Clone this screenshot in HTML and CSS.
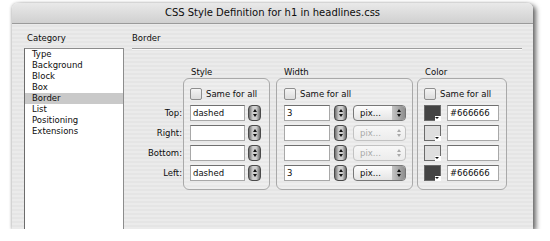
FILE: index.html
```html
<!DOCTYPE html>
<html lang="en">

<head>
  <meta charset="UTF-8" />
  <title>CSS Style Definition</title>
  <link rel="stylesheet" href="styles.css">
</head>

<body>
  <div class="window">
    <div class="titlebar">CSS Style Definition for h1 in headlines.css</div>

    <div class="content">
      <div class="sidebar">
        <div class="heading">Category</div>
        <ul class="categories">
          <li>Type</li>
          <li>Background</li>
          <li>Block</li>
          <li>Box</li>
          <li class="selected">Border</li>
          <li>List</li>
          <li>Positioning</li>
          <li>Extensions</li>
        </ul>
      </div>

      <div class="panel">
        <div class="heading panel-title">Border</div>

        <div class="groups">
          <div class="side-labels">
            <div class="row">Top:</div>
            <div class="row">Right:</div>
            <div class="row">Bottom:</div>
            <div class="row">Left:</div>
          </div>

          <!-- Style -->
          <div class="group group-style">
            <div class="group-label">Style</div>
            <div class="group-box">
              <div class="same"><span class="check"></span>Same for all</div>
              <div class="row"><span class="field field-style">dashed</span><span class="stepper"></span></div>
              <div class="row"><span class="field field-style"></span><span class="stepper"></span></div>
              <div class="row"><span class="field field-style"></span><span class="stepper"></span></div>
              <div class="row"><span class="field field-style">dashed</span><span class="stepper"></span></div>
            </div>
          </div>

          <!-- Width -->
          <div class="group group-width">
            <div class="group-label">Width</div>
            <div class="group-box">
              <div class="same"><span class="check"></span>Same for all</div>
              <div class="row">
                <span class="field field-width">3</span><span class="stepper"></span>
                <span class="select"><span class="select-text">pix...</span><span class="select-arrows"></span></span>
              </div>
              <div class="row">
                <span class="field field-width"></span><span class="stepper"></span>
                <span class="select disabled"><span class="select-text">pix...</span><span class="select-arrows"></span></span>
              </div>
              <div class="row">
                <span class="field field-width"></span><span class="stepper"></span>
                <span class="select disabled"><span class="select-text">pix...</span><span class="select-arrows"></span></span>
              </div>
              <div class="row">
                <span class="field field-width">3</span><span class="stepper"></span>
                <span class="select"><span class="select-text">pix...</span><span class="select-arrows"></span></span>
              </div>
            </div>
          </div>

          <!-- Color -->
          <div class="group group-color">
            <div class="group-label">Color</div>
            <div class="group-box">
              <div class="same"><span class="check"></span>Same for all</div>
              <div class="row"><span class="swatch"></span><span class="field field-color">#666666</span></div>
              <div class="row"><span class="swatch empty"></span><span class="field field-color"></span></div>
              <div class="row"><span class="swatch empty"></span><span class="field field-color"></span></div>
              <div class="row"><span class="swatch"></span><span class="field field-color">#666666</span></div>
            </div>
          </div>
        </div>
      </div>
    </div>
  </div>
</body>

</html>
```

FILE: styles.css
```css
body {
  margin: 0;
  background: #fff;
  font-family: "DejaVu Sans", sans-serif;
  font-size: 8.5px;
  color: #0d0d0d;
}

.window {
  margin: 3px 0 0 12px;
  width: 521px;
  height: 226px;
  overflow: hidden;
  border-radius: 6px 6px 0 0;
  background: repeating-linear-gradient(#ebebeb 0 2px, #e5e5e5 2px 4px);
  box-shadow: 3px 2px 5px rgba(0, 0, 0, 0.6), -1px 0 3px rgba(0, 0, 0, 0.2);
}

.titlebar {
  height: 20px;
  line-height: 20px;
  text-align: center;
  font-size: 10px;
  background: linear-gradient(#e9e9e9, #d0d0d0);
  border-bottom: 1px solid #9a9a9a;
}

.content {
  display: flex;
  gap: 8px;
  padding: 8px 11px 0 12px;
}

.heading {
  height: 12px;
  line-height: 12px;
  padding-left: 3px;
  margin-bottom: 4px;
}

/* lista de categorias */
.sidebar {
  width: 100px;
}

.categories {
  list-style: none;
  margin: 0;
  padding: 0;
  height: 200px;
  background: #fff;
  border: 1px solid #8c8c8c;
  border-left-color: #6c6c6c;
}

.categories li {
  height: 11px;
  line-height: 11px;
  padding-left: 7px;
}

.categories .selected {
  background-color: #c9c9c9;
}

.panel {
  flex: 1;
}

.panel-title {
  padding-left: 0;
  margin-bottom: 0;
  padding-bottom: 4px;
  border-bottom: 1px solid #9c9c9c;
  box-shadow: 0 1px 0 #fafafa;
}

.groups {
  display: flex;
  margin-top: 17px;
}

.side-labels {
  width: 51px;
  padding-top: 37px;
  text-align: right;
}

.side-labels .row {
  height: 20px;
  line-height: 20px;
  padding-right: 1px;
}

.group-label {
  height: 12px;
  line-height: 12px;
  padding-left: 8px;
}

.group-box {
  border: 1px solid #a9a9a9;
  border-radius: 6px;
  padding: 6px 0 6px 6px;
  background: repeating-linear-gradient(#eeeeee 0 2px, #e8e8e8 2px 4px);
}

.group-style {
  width: 87px;
}

.group-width {
  width: 137px;
  margin-left: 6px;
}

.group-width .group-box {
  padding-left: 7px;
}

.group-color {
  width: 90px;
  margin-left: 4px;
}

.same {
  display: flex;
  align-items: center;
  height: 18px;
}

.check {
  width: 10px;
  height: 10px;
  margin-right: 4px;
  border: 1px solid #8e8e8e;
  border-radius: 2px;
  background: linear-gradient(#f4f4f4, #dcdcdc);
}

.group-box .row {
  display: flex;
  align-items: center;
  height: 20px;
}

.field {
  box-sizing: border-box;
  height: 16px;
  line-height: 14px;
  padding-left: 2px;
  background: #fff;
  border: 1px solid #a8a8a8;
  border-top-color: #6f6f6f;
}

.field-style {
  width: 55px;
}

.field-width {
  width: 46px;
}

.field-color {
  width: 52px;
  margin-left: 6px;
}

.stepper {
  position: relative;
  box-sizing: border-box;
  width: 13px;
  height: 16px;
  margin-left: 3px;
  border: 1px solid #4a4a4a;
  border-radius: 4px;
  background: linear-gradient(to right, #6f6f6f, #cfcfcf 35%, #cfcfcf 65%, #6f6f6f);
}

.group-width .stepper {
  margin-left: 4px;
}

.stepper::before,
.stepper::after,
.select-arrows::before,
.select-arrows::after {
  content: "";
  position: absolute;
  left: 50%;
  margin-left: -2px;
  border-left: 2px solid transparent;
  border-right: 2px solid transparent;
}

.stepper::before,
.select-arrows::before {
  top: 3px;
  border-bottom: 3px solid #111;
}

.stepper::after,
.select-arrows::after {
  bottom: 3px;
  border-top: 3px solid #111;
}

.select {
  display: flex;
  box-sizing: border-box;
  width: 53px;
  height: 16px;
  margin-left: 6px;
  border: 1px solid #777;
  border-radius: 4px;
  overflow: hidden;
  background: linear-gradient(#fdfdfd, #e4e4e4);
}

.select-text {
  flex: 1;
  line-height: 14px;
  padding-left: 6px;
}

.select-arrows {
  position: relative;
  width: 13px;
  background: linear-gradient(to right, #c4c4c4, #8e8e8e);
}

.select.disabled {
  border-color: #c2c2c2;
  background: linear-gradient(#f7f7f7, #ececec);
  color: #a9a9a9;
}

.select.disabled .select-arrows {
  background: none;
}

.select.disabled .select-arrows::before {
  border-bottom-color: #aaa;
}

.select.disabled .select-arrows::after {
  border-top-color: #aaa;
}

.swatch {
  position: relative;
  box-sizing: border-box;
  width: 17px;
  height: 16px;
  border: 1px solid #6a6a6a;
  background: #444;
}

.swatch.empty {
  background: #dedede;
}

.swatch::after {
  content: "";
  position: absolute;
  right: -1px;
  bottom: -1px;
  width: 6px;
  height: 5px;
  background: #fff;
}

.swatch::before {
  content: "";
  position: absolute;
  right: 1px;
  bottom: 1px;
  z-index: 1;
  border-left: 2px solid transparent;
  border-right: 2px solid transparent;
  border-top: 2px solid #111;
}
```
